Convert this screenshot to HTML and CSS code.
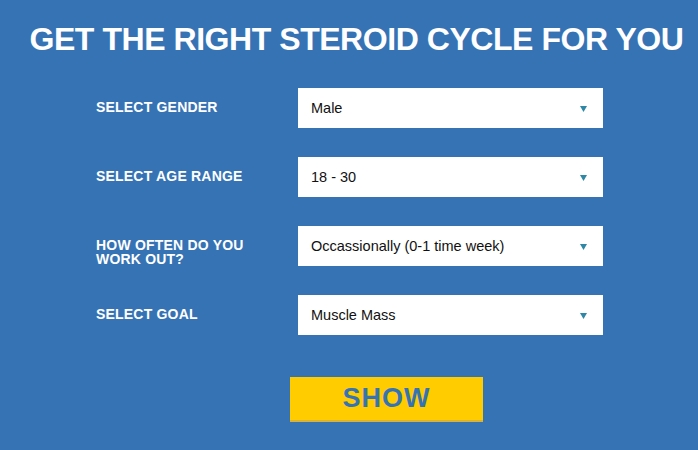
FILE: index.html
```html
<!DOCTYPE html>
<html lang="en">
<head>
    <meta charset="UTF-8">
    <meta name="viewport" content="width=device-width, initial-scale=1.0">
    <title>Steroid Cycle Finder</title>
    <link rel="stylesheet" href="styles.css">
</head>
<body>
    <div class="container">
        <h1>GET THE RIGHT STEROID CYCLE FOR YOU</h1>

        <div class="form">
            <label for="gender">SELECT GENDER</label>
            <div class="select-wrap">
                <select id="gender">
                    <option>Male</option>
                    <option>Female</option>
                </select>
                <svg class="arrow" width="7" height="6" viewBox="0 0 7 6"><path d="M0 0H7L3.5 6Z"/></svg>
            </div>

            <label for="age">SELECT AGE RANGE</label>
            <div class="select-wrap">
                <select id="age">
                    <option>18 - 30</option>
                    <option>31 - 45</option>
                    <option>46+</option>
                </select>
                <svg class="arrow" width="7" height="6" viewBox="0 0 7 6"><path d="M0 0H7L3.5 6Z"/></svg>
            </div>

            <label for="workout">HOW OFTEN DO YOU WORK OUT?</label>
            <div class="select-wrap">
                <select id="workout">
                    <option>Occassionally (0-1 time week)</option>
                    <option>Regularly (2-4 times week)</option>
                    <option>Often (5+ times week)</option>
                </select>
                <svg class="arrow" width="7" height="6" viewBox="0 0 7 6"><path d="M0 0H7L3.5 6Z"/></svg>
            </div>

            <label for="goal">SELECT GOAL</label>
            <div class="select-wrap">
                <select id="goal">
                    <option>Muscle Mass</option>
                    <option>Cutting</option>
                    <option>Strength</option>
                </select>
                <svg class="arrow" width="7" height="6" viewBox="0 0 7 6"><path d="M0 0H7L3.5 6Z"/></svg>
            </div>
        </div>

        <div class="actions">
            <button type="button">SHOW</button>
        </div>
    </div>
</body>
</html>
```

FILE: styles.css
```css
body {
    font-family: "Liberation Sans", Arial, sans-serif;
    margin: 0;
    padding: 0;
    background-color: #3673b5;
}
.container {
    width: 698px;
    height: 450px;
    padding-top: 21px;
    box-sizing: border-box;
}
h1 {
    margin: 0;
    padding-left: 15px;
    text-align: center;
    color: #ffffff;
    font-size: 32px;
    line-height: 36px;
    font-weight: bold;
    letter-spacing: -0.45px;
}
.form {
    display: grid;
    grid-template-columns: 202px 305px;
    row-gap: 29px;
    margin: 31px 0 0 96px;
}
label {
    padding-top: 12px;
    padding-right: 36px;
    color: #ffffff;
    font-size: 14px;
    line-height: 14px;
    font-weight: bold;
    letter-spacing: 0.2px;
}
.select-wrap {
    position: relative;
    height: 40px;
}
select {
    appearance: none;
    -webkit-appearance: none;
    width: 100%;
    height: 40px;
    padding: 0 30px 0 13px;
    border: none;
    border-radius: 0;
    background: #ffffff;
    color: #111111;
    font-family: "Liberation Sans", Arial, sans-serif;
    font-size: 14.5px;
    outline: none;
}
.arrow {
    position: absolute;
    right: 16px;
    top: 18px;
    fill: #2f87a6;
    pointer-events: none;
}
.actions {
    display: flex;
    margin: 42px 0 0 290px;
}
button {
    width: 193px;
    height: 45px;
    padding: 0;
    background-color: #ffcc00;
    color: #3673b5;
    border: none;
    border-bottom: 2px solid #d9b23a;
    font-family: "Liberation Sans", Arial, sans-serif;
    font-size: 27px;
    font-weight: bold;
    letter-spacing: 1px;
    cursor: pointer;
}
```
